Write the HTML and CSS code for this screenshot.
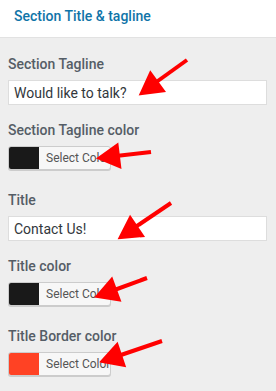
FILE: index.html
```html
<!DOCTYPE html>
<html lang="en">
<head>
    <meta charset="UTF-8">
    <meta name="viewport" content="width=device-width, initial-scale=1.0">
    <title>Section Title &amp; tagline</title>
    <link rel="stylesheet" href="styles.css">
</head>
<body>

<header class="section-head">
    <h3>Section Title &amp; tagline</h3>
</header>

<section class="panel">
    <div class="field">
        <label>Section Tagline</label>
        <input type="text" value="Would like to talk?">
    </div>
    <div class="field field-color">
        <label>Section Tagline color</label>
        <button class="color-btn"><span class="swatch swatch-dark"></span><span class="color-text">Select Color</span></button>
    </div>
    <div class="field">
        <label>Title</label>
        <input type="text" value="Contact Us!">
    </div>
    <div class="field field-color">
        <label>Title color</label>
        <button class="color-btn"><span class="swatch swatch-dark"></span><span class="color-text">Select Color</span></button>
    </div>
    <div class="field field-color">
        <label>Title Border color</label>
        <button class="color-btn"><span class="swatch swatch-red"></span><span class="color-text">Select Color</span></button>
    </div>
</section>

<!-- red annotation arrows drawn over the form -->
<svg class="arrows" width="276" height="391" viewBox="0 0 276 391">
    <g stroke="#ff0000" stroke-width="4" fill="#ff0000">
        <line x1="187" y1="60" x2="155" y2="83"/>
        <polygon points="142,93 162.4,90.5 150.6,74.3"/>
        <line x1="151" y1="152" x2="116" y2="156"/>
        <polygon points="100,158 119.1,165.8 116.7,146"/>
        <line x1="171" y1="203" x2="134" y2="228"/>
        <polygon points="121,237 141.5,235.2 130.3,218.6"/>
        <line x1="147" y1="278" x2="113" y2="290.5"/>
        <polygon points="98,296 118.4,299.2 111.5,280.4"/>
        <line x1="162" y1="341" x2="118" y2="356"/>
        <polygon points="103,361 123.2,364.7 116.8,345.7"/>
    </g>
</svg>

</body>
</html>
```

FILE: styles.css
```css
body {
    font-family: Roboto, "Noto Sans", Arial, sans-serif;
    background-color: #eeeeee;
    margin: 0;
    padding: 0;
    width: 276px;
    height: 391px;
    overflow: hidden;
    position: relative;
}
.section-head {
    background-color: #fff;
    height: 37px;
    border-bottom: 1px solid #e2e2e2;
    padding-left: 14px;
}
.section-head h3 {
    margin: 0;
    font-size: 14px;
    font-weight: 500;
    line-height: 33px;
    color: #0f74a8;
}
.panel {
    padding: 16px 9px 0 8px;
}
.field {
    margin-bottom: 15px;
}
.field-color {
    margin-bottom: 20px;
}
.field label {
    display: block;
    font-size: 14px;
    font-weight: 500;
    line-height: 20px;
    color: #555d66;
    margin-bottom: 6px;
}
.field input {
    display: block;
    box-sizing: border-box;
    width: 100%;
    height: 25px;
    margin: 0;
    padding: 0 5px;
    border: 1px solid #dddddd;
    background-color: #fff;
    font-family: inherit;
    font-size: 14px;
    color: #32373c;
    outline: none;
}
/* Color picker button */
.color-btn {
    display: flex;
    align-items: stretch;
    box-sizing: border-box;
    width: 103px;
    height: 24px;
    margin: 0;
    padding: 0;
    border: 1px solid #cccccc;
    border-radius: 3px;
    background-color: #f7f7f7;
    box-shadow: 0 1px 0 #cccccc;
    overflow: hidden;
    font-family: inherit;
    cursor: pointer;
}
.swatch {
    width: 30px;
    flex: none;
}
.swatch-dark {
    background-color: #191919;
}
.swatch-red {
    background-color: #ff4224;
}
.color-text {
    padding-left: 7px;
    font-size: 12px;
    line-height: 22px;
    color: #555555;
    white-space: nowrap;
}
.arrows {
    position: absolute;
    top: 0;
    left: 0;
    pointer-events: none;
}
```
